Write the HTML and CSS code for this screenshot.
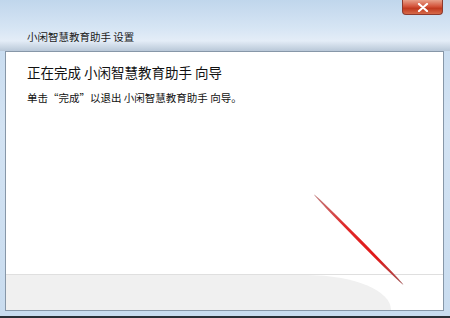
FILE: index.html
```html
<!DOCTYPE html>
<html lang="zh-CN">
<head>
    <meta charset="UTF-8">
    <meta name="viewport" content="width=device-width, initial-scale=1.0">
    <title>小闲智慧教育助手 设置</title>
    <link rel="stylesheet" href="styles.css">
</head>
<body>
    <div class="window">
        <!-- 标题栏 -->
        <div class="titlebar">
            <span class="title">小闲智慧教育助手 设置</span>
            <button class="close" aria-label="关闭">
                <svg width="12" height="9" viewBox="0 0 12 9">
                    <path d="M2 1 L10 8 M10 1 L2 8" stroke="#ffffff" stroke-width="2.2" stroke-linecap="round"/>
                </svg>
            </button>
        </div>

        <!-- 内容 -->
        <div class="panel">
            <div class="content">
                <h1>正在完成 小闲智慧教育助手 向导</h1>
                <p>单击“完成”以退出 小闲智慧教育助手 向导。</p>
                <div class="arrow"></div>
            </div>
            <div class="footer">
                <div class="footer-gray"></div>
            </div>
        </div>
    </div>
</body>
</html>
```

FILE: styles.css
```css
body {
    margin: 0;
    width: 450px;
    height: 318px;
    overflow: hidden;
    font-family: "Noto Sans CJK SC", "Microsoft YaHei", sans-serif;
    background-color: #2a2f36;
}

.window {
    height: 316px;
    display: flex;
    flex-direction: column;
    background: linear-gradient(180deg, #c4d9ee 0%, #d3e3f3 40%, #c9dcef 100%);
    padding: 0 6px 5px 5px;
    box-sizing: border-box;
}

.titlebar {
    height: 51px;
    display: flex;
    justify-content: space-between;
    align-items: flex-start;
    background: linear-gradient(180deg, #c0d6ec 0%, #d6e5f4 55%, #e4edf7 80%, #b9c8d8 100%);
    margin: 0 -6px 0 -5px;
    padding: 0 7px 0 27px;
}

.title {
    margin-top: 29px;
    font-size: 10.5px;
    color: #1a1a1a;
}

.close {
    width: 41px;
    height: 15px;
    margin: 0;
    padding: 0;
    border: 1px solid #8c3a2e;
    border-top: none;
    border-radius: 0 0 4px 4px;
    background: linear-gradient(180deg, #e8a08a 0%, #d4553c 45%, #c13a20 60%, #d66a4a 100%);
    display: flex;
    align-items: center;
    justify-content: center;
}

.panel {
    flex: 1;
    display: flex;
    flex-direction: column;
    background-color: #ffffff;
    border: 1px solid #8797a8;
    position: relative;
}

.content {
    flex: 1;
    padding: 10px 21px 0 21px;
}

.content h1 {
    margin: 0;
    font-size: 13.5px;
    font-weight: normal;
    color: #111111;
}

.content p {
    margin: 8px 0 0 0;
    font-size: 10.5px;
    color: #111111;
}

.arrow {
    position: absolute;
    left: 308px;
    top: 141px;
    width: 127px;
    height: 3px;
    border-radius: 50%;
    background: linear-gradient(90deg, #c08080 0%, #e02828 35%, #e01818 70%, #a05858 100%);
    transform-origin: 0 50%;
    transform: rotate(45.3deg);
}

.footer {
    height: 35px;
    border-top: 1px solid #dfdfdf;
    display: flex;
}

.footer-gray {
    width: 385px;
    background-color: #f0f0f0;
    border-top-right-radius: 90px 38px;
}
```
